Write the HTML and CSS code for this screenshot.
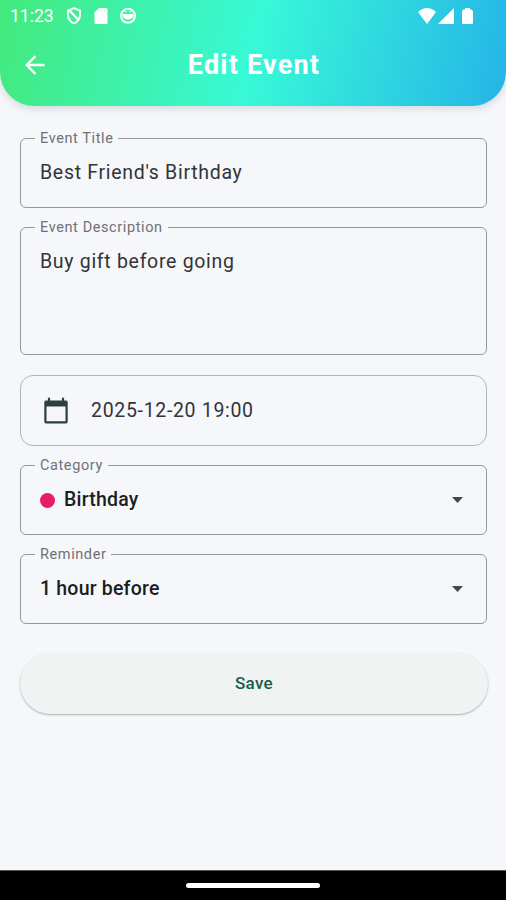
FILE: index.html
```html
<!DOCTYPE html>
<html lang="en">
<head>
<meta charset="utf-8">
<title>Edit Event</title>
<link rel="stylesheet" href="styles.css">
</head>
<body>
<div class="screen">
  <header class="header">
    <div class="status">
      <span class="clock">11:23</span>
      <svg class="shield" width="16" height="18" viewBox="0 0 16 18"><path d="M8 1.200 14 3.500V8c0 4-2.400 6.800-6 8.500C4.400 14.800 2 12 2 8V3.500Z" fill="none" stroke="#fff" stroke-width="1.900"/><path d="m4 4 8.500 9" stroke="#fff" stroke-width="2.300"/></svg>
      <svg class="sdcard" width="14" height="18" viewBox="0 0 14 18"><path fill="#fff" d="M5 1h7q1.500 0 1.500 1.500v13q0 1.500-1.500 1.500H2Q.5 17 .5 15.500V5.500Z"/><path d="M6 3v1.500M8.300 3v1.500M10.600 3v1.500" stroke="#a5f7d0" stroke-width=".8"/></svg>
      <svg class="face" width="16" height="18" viewBox="0 0 16 18"><circle cx="8" cy="8.800" r="7" fill="none" stroke="#fff" stroke-width="2"/><path d="M2.500 7h11q.3 3.200-2 4.700-3.500 1.500-7 0Q2.200 10.200 2.500 7Z" fill="#fff"/><path d="M4.500 4.500h2M9.500 4.500h2" stroke="#fff" stroke-width="1"/></svg>
      <svg class="wifi" width="18" height="16" viewBox="0 0 18 16"><path d="M0 4Q9-4 18 4L9 16Z" fill="#fff"/></svg>
      <svg class="signal" width="16" height="16" viewBox="0 0 16 16"><path d="M16 0v16H0Z" fill="#fff"/></svg>
      <svg class="battery" width="11" height="16" viewBox="0 0 11 16"><path d="M3 0h5v1.500h1.500L11 3v12q0 1-1 1H1q-1 0-1-1V3l1.500-1.500H3Z" fill="#fff"/></svg>
    </div>
    <div class="appbar">
      <svg class="back" width="22" height="22" viewBox="0 0 22 22"><path d="M20.500 11H3M11.500 2 2.700 11l8.800 9" fill="none" stroke="#fff" stroke-width="2.400"/></svg>
      <h1 class="title">Edit Event</h1>
    </div>
  </header>
  <main class="form">
    <div class="field">
      <span class="label">Event Title</span>
      <span class="value value-title">Best Friend's Birthday</span>
    </div>
    <div class="field field-description">
      <span class="label">Event Description</span>
      <span class="value value-description">Buy gift before going</span>
    </div>
    <div class="field field-date">
      <svg class="calendar" width="26" height="28" viewBox="0 0 26 28"><path d="M3 3.500h20q1.700 0 1.700 1.700v19.600q0 1.700-1.700 1.700H3q-1.700 0-1.700-1.700V5.200q0-1.700 1.700-1.700Zm.5 6v14.800h19V9.500Z" fill="#2c3f41" fill-rule="evenodd"/><path d="M6 .8v4M20 .8v4" stroke="#2c3f41" stroke-width="2.200"/></svg>
      <span class="value value-date">2025-12-20 19:00</span>
    </div>
    <div class="field field-select">
      <span class="label">Category</span>
      <span class="dot"></span>
      <span class="value value-category">Birthday</span>
      <svg class="arrow" width="11" height="6" viewBox="0 0 11 6"><path d="M0 0h11L5.500 6Z" fill="#444748"/></svg>
    </div>
    <div class="field field-select">
      <span class="label">Reminder</span>
      <span class="value value-reminder">1 hour before</span>
      <svg class="arrow" width="11" height="6" viewBox="0 0 11 6"><path d="M0 0h11L5.500 6Z" fill="#444748"/></svg>
    </div>
    <button class="save" type="button">Save</button>
  </main>
  <footer class="navbar"><span class="handle"></span></footer>
</div>
</body>
</html>
```
FILE: styles.css
```css
* { box-sizing: border-box; }
body { margin: 0; background: #f5f7fb; font-family: Roboto, "Liberation Sans", sans-serif; }
svg { display: block; flex: none; }
.screen { width: 506px; height: 900px; display: flex; flex-direction: column; background: #f5f7fb; overflow: hidden; }

.header { height: 106px; flex: none; border-radius: 0 0 34px 34px; background: linear-gradient(101.700deg, #43e97b 0%, #38f9d7 50%, #25b4e8 100%); box-shadow: 0 3px 9px rgba(0, 0, 0, .12); }
.status { height: 32px; display: flex; align-items: center; padding: 0 33px 0 10px; color: #fff; }
.clock { width: 56px; font-size: 17.500px; line-height: 32px; white-space: nowrap; }
.sdcard { margin-left: 12px; }
.face { margin-left: 12px; }
.wifi { margin-left: auto; }
.signal { margin-left: 2px; }
.battery { margin-left: 8px; }
.appbar { height: 64px; display: grid; grid-template-columns: 46px 1fr 46px; align-items: center; padding-top: 1px; }
.back { justify-self: end; }
.title { margin: 0; padding-left: 2px; font-size: 27px; font-weight: 700; line-height: 62px; letter-spacing: 1.200px; text-align: center; color: #fff; white-space: nowrap; }

.form { flex: 1; display: flex; flex-direction: column; padding: 32px 18px 0 20px; }
.field { position: relative; height: 70px; margin: 0 1px 19px 0; padding: 0 23px 0 19px; display: flex; align-items: center; flex: none; border: 1px solid #96989c; border-radius: 6px; }
.field-description { height: 128px; margin-bottom: 20px; padding-top: 22px; align-items: flex-start; }
.field-date { height: 71px; padding-left: 22px; border-color: #b2b4b9; border-radius: 13px; }
.label { position: absolute; top: -9px; left: 14px; padding: 0 5px; font-size: 14.500px; line-height: 18px; letter-spacing: .6px; color: #6f7175; background: #f5f7fb; white-space: nowrap; }
.value { font-size: 19.500px; line-height: 24px; letter-spacing: .7px; color: #323436; white-space: nowrap; }
.value-date { margin-left: 22px; letter-spacing: .68px; }
.value-category, .value-reminder { font-weight: 500; letter-spacing: .2px; color: #1b1d1f; }
.dot { width: 15px; height: 15px; margin-right: 9px; border-radius: 50%; background: #e91e63; }
.arrow { margin-left: auto; }
.save { height: 61px; margin: 10px 0 0 0; padding: 0 0 2px; border: 0; border-radius: 31px; background: #eff4f3; box-shadow: 0 1px 2px rgba(0, 0, 0, .3); color: #1e5a49; font: 500 17px/24px Roboto, "Liberation Sans", sans-serif; letter-spacing: .3px; }
.navbar { height: 30px; flex: none; display: flex; align-items: center; justify-content: center; background: #000; border-top: 1px solid #555; }
.handle { width: 134px; height: 5px; border-radius: 3px; background: #fff; }
```
